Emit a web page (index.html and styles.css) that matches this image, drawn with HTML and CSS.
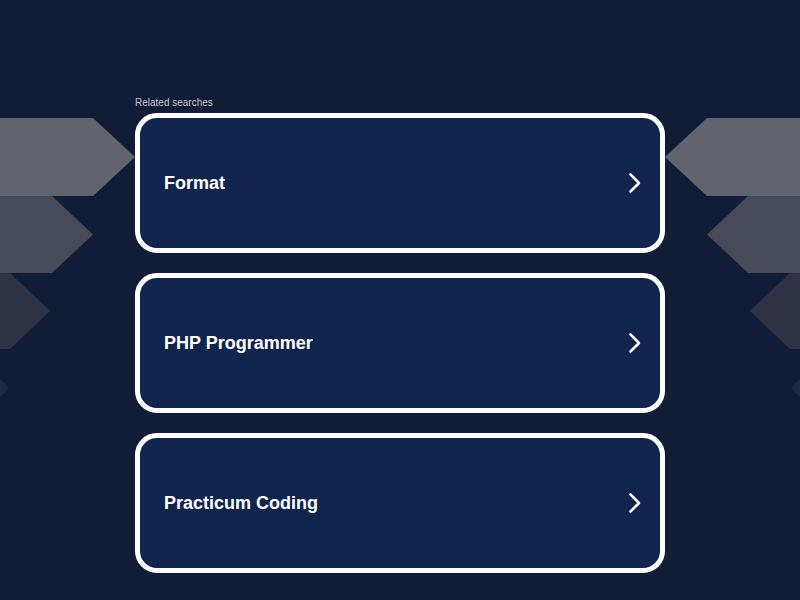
FILE: index.html
```html
<!DOCTYPE html>
<html lang="en">
<head>
<meta charset="utf-8">
<title>Related searches</title>
<link rel="stylesheet" href="styles.css">
</head>
<body>
<svg class="deco deco-left" width="140" height="440" viewBox="0 0 140 440" aria-hidden="true">
  <polygon points="0,118 93,118 135,157 93,196 0,196" fill="#61646f"/>
  <polygon points="0,196 52,196 93,234.5 52,273 0,273" fill="#474a59"/>
  <polygon points="0,273 10,273 50,311 10,349 0,349" fill="#2f3345"/>
  <polygon points="0,379 9,388 0,397" fill="#22283b"/>
</svg>
<svg class="deco deco-right" width="140" height="440" viewBox="0 0 140 440" aria-hidden="true">
  <polygon points="140,118 47,118 5,157 47,196 140,196" fill="#61646f"/>
  <polygon points="140,196 88,196 47,234.5 88,273 140,273" fill="#474a59"/>
  <polygon points="140,273 130,273 90,311 130,349 140,349" fill="#2f3345"/>
  <polygon points="140,379 131,388 140,397" fill="#22283b"/>
</svg>
<main class="wrap">
  <div class="label">Related searches</div>
  <ul class="list">
    <li><a class="card" href="#"><span class="title">Format</span><svg class="chev" width="14" height="22" viewBox="0 0 14 22"><polyline points="2.5,2.5 11,11 2.5,19.5" fill="none" stroke="#fff" stroke-width="2.6" stroke-linecap="round" stroke-linejoin="round"/></svg></a></li>
    <li><a class="card" href="#"><span class="title">PHP Programmer</span><svg class="chev" width="14" height="22" viewBox="0 0 14 22"><polyline points="2.5,2.5 11,11 2.5,19.5" fill="none" stroke="#fff" stroke-width="2.6" stroke-linecap="round" stroke-linejoin="round"/></svg></a></li>
    <li><a class="card" href="#"><span class="title">Practicum Coding</span><svg class="chev" width="14" height="22" viewBox="0 0 14 22"><polyline points="2.5,2.5 11,11 2.5,19.5" fill="none" stroke="#fff" stroke-width="2.6" stroke-linecap="round" stroke-linejoin="round"/></svg></a></li>
  </ul>
</main>
</body>
</html>
```

FILE: styles.css
```css
html, body {
  margin: 0;
  padding: 0;
  height: 100%;
}
body {
  background: #111c36;
  font-family: "Liberation Sans", Arial, sans-serif;
  overflow: hidden;
}
.deco {
  position: absolute;
  top: 0;
}
.deco-left { left: 0; }
.deco-right { right: 0; }
.wrap {
  position: relative;
  width: 530px;
  margin: 0 auto;
  padding-top: 97px;
}
.label {
  font-size: 10px;
  line-height: 12px;
  color: #c3c8d2;
  margin-bottom: 4px;
}
.list {
  list-style: none;
  margin: 0;
  padding: 0;
  display: flex;
  flex-direction: column;
  gap: 20px;
}
.card {
  box-sizing: border-box;
  height: 140px;
  display: flex;
  align-items: center;
  justify-content: space-between;
  border: 5px solid #fff;
  border-radius: 22px;
  background: #11244d;
  padding: 1px 18px 0 24px;
  text-decoration: none;
  color: #fff;
}
.title {
  font-size: 18px;
  font-weight: bold;
}
.chev {
  display: block;
  margin-bottom: 2px;
}
```
